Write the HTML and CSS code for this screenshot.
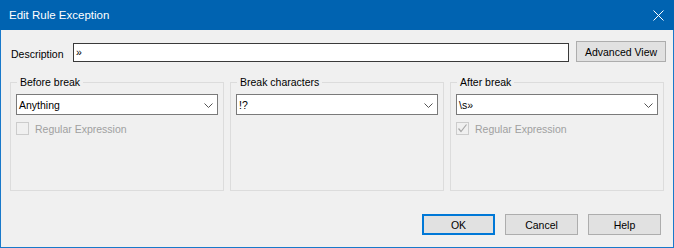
FILE: index.html
```html
<!DOCTYPE html>
<html>
<head>
<meta charset="utf-8">
<link rel="stylesheet" href="styles.css">
</head>
<body>
<div class="window">
  <div class="titlebar">
    <span class="title">Edit Rule Exception</span>
    <svg class="close" width="11" height="11" viewBox="0 0 11 11"><path d="M0.5 0.5 L10.5 10.5 M10.5 0.5 L0.5 10.5" stroke="#fff" stroke-width="1" fill="none"/></svg>
  </div>
  <div class="content">
    <div class="desc-row">
      <label class="desc-label">Description</label>
      <div class="textbox">»</div>
      <div class="btn btn-adv">Advanced View</div>
    </div>
    <div class="groups">
      <div class="group">
        <span class="legend">Before break</span>
        <div class="combo"><span class="combo-text">Anything</span><svg class="chev" width="9" height="5" viewBox="0 0 9 5"><path d="M0.5 0.5 L4.5 4.5 L8.5 0.5" stroke="#555" stroke-width="1" fill="none"/></svg></div>
        <div class="check-row">
          <span class="checkbox"></span>
          <span class="check-label">Regular Expression</span>
        </div>
      </div>
      <div class="group">
        <span class="legend">Break characters</span>
        <div class="combo"><span class="combo-text">!?</span><svg class="chev" width="9" height="5" viewBox="0 0 9 5"><path d="M0.5 0.5 L4.5 4.5 L8.5 0.5" stroke="#555" stroke-width="1" fill="none"/></svg></div>
      </div>
      <div class="group">
        <span class="legend">After break</span>
        <div class="combo"><span class="combo-text">\s»</span><svg class="chev" width="9" height="5" viewBox="0 0 9 5"><path d="M0.5 0.5 L4.5 4.5 L8.5 0.5" stroke="#555" stroke-width="1" fill="none"/></svg></div>
        <div class="check-row">
          <span class="checkbox"><svg width="11" height="11" viewBox="0 0 11 11"><path d="M1.5 5.5 L4 8.5 L9.5 1.5" stroke="#a8a8a8" stroke-width="1.2" fill="none"/></svg></span>
          <span class="check-label">Regular Expression</span>
        </div>
      </div>
    </div>
    <div class="buttons">
      <div class="btn btn-default">OK</div>
      <div class="btn">Cancel</div>
      <div class="btn">Help</div>
    </div>
  </div>
</div>
</body>
</html>
```

FILE: styles.css
```css
html, body {
  margin: 0;
  padding: 0;
  background: #f0f0f0;
}
.window {
  width: 674px;
  height: 248px;
  font-family: "Liberation Sans", Arial, sans-serif;
  font-size: 10.5px;
  color: #000;
  display: flex;
  flex-direction: column;
}
.titlebar {
  height: 30px;
  background: #0063b1;
  display: flex;
  align-items: center;
  justify-content: space-between;
  padding: 0 10px 0 9px;
  color: #fff;
  font-size: 11.5px;
  flex: none;
}
.title {
  line-height: 14px;
}
.close {
  display: block;
}
.content {
  flex: 1;
  border: 1px solid #1979ca;
  border-top: 0;
  background: #f0f0f0;
  padding: 11px 7px 0 9px;
  display: flex;
  flex-direction: column;
}
.desc-row {
  display: flex;
  align-items: flex-start;
  height: 21px;
}
.desc-label {
  width: 62px;
  margin-left: 1px;
  line-height: 12px;
  margin-top: 7px;
}
.textbox {
  width: 496px;
  height: 19px;
  box-sizing: border-box;
  margin-top: 2px;
  border: 1px solid #3a3a3a;
  background: #fff;
  padding-left: 2px;
  line-height: 16px;
}
.btn {
  box-sizing: border-box;
  height: 21px;
  width: 73px;
  border: 1px solid #adadad;
  background: #e1e1e1;
  display: flex;
  align-items: center;
  justify-content: center;
  line-height: 12px;
}
.btn-adv {
  width: 90px;
  margin-left: 7px;
}
.btn-default {
  border: 2px solid #0078d7;
}
.groups {
  display: flex;
  gap: 6px;
  margin-top: 20px;
}
.group {
  position: relative;
  width: 214px;
  height: 109px;
  box-sizing: border-box;
  border: 1px solid #dcdcdc;
  padding: 11px 5px 0 5px;
}
.legend {
  position: absolute;
  top: -7px;
  left: 6px;
  padding: 0 3px;
  background: #f0f0f0;
  line-height: 12px;
}
.combo {
  height: 21px;
  box-sizing: border-box;
  border: 1px solid #7a7a7a;
  background: #fff;
  display: flex;
  align-items: center;
  justify-content: space-between;
  padding: 0 4px 0 2px;
  line-height: 12px;
}
.chev {
  display: block;
  margin-top: 1px;
}
.check-row {
  display: flex;
  align-items: center;
  margin-top: 7px;
  height: 13px;
}
.checkbox {
  width: 13px;
  height: 13px;
  box-sizing: border-box;
  border: 1px solid #cccccc;
  background: #f0f0f0;
  display: flex;
  align-items: center;
  justify-content: center;
}
.checkbox svg {
  display: block;
}
.check-label {
  margin-left: 6px;
  color: #a0a0a0;
  line-height: 12px;
}
.buttons {
  display: flex;
  justify-content: flex-end;
  gap: 10px;
  margin-top: 23px;
  padding-right: 5px;
}
```
